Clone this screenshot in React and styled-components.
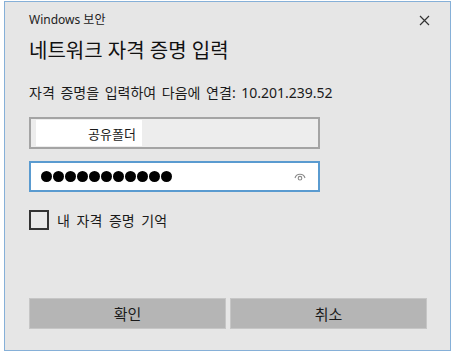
import styled, { createGlobalStyle } from 'styled-components';

const GlobalStyle = createGlobalStyle`
   html, body {
      margin: 0;
      padding: 0;
      background: #ffffff;
   }
   body {
      font-family: "Noto Sans", "Noto Sans CJK KR", sans-serif;
      color: #1a1a1a;
   }
`;

function CloseIcon() {
   return (
      <svg width="11" height="11" viewBox="0 0 11 11">
         <path d="M1 1 L10 10 M10 1 L1 10" stroke="#333" strokeWidth="1.2" fill="none" />
      </svg>
   );
}

function EyeIcon() {
   return (
      <svg width="12" height="9" viewBox="0 0 12 9">
         <path d="M1 6 A5.2 5.2 0 0 1 11 6" stroke="#8a8a8a" strokeWidth="1.1" fill="none" />
         <circle cx="6" cy="6.2" r="1.8" stroke="#8a8a8a" strokeWidth="1.1" fill="none" />
      </svg>
   );
}

function App() {
   const dots = Array.from({ length: 11 });
   return (
      <>
         <GlobalStyle />
         <Frame>
            <TopBar>
               <Caption>Windows 보안</Caption>
               <CloseButton>
                  <CloseIcon />
               </CloseButton>
            </TopBar>
            <Title>네트워크 자격 증명 입력</Title>
            <Subtitle>자격 증명을 입력하여 다음에 연결: 10.201.239.52</Subtitle>
            <Field>
               <Masked>공유폴더</Masked>
            </Field>
            <Field $focused>
               <Dots>
                  {dots.map((_, i) => (
                     <Dot key={i} />
                  ))}
               </Dots>
               <EyeIcon />
            </Field>
            <Remember>
               <Checkbox />
               <span>내 자격 증명 기억</span>
            </Remember>
            <Buttons>
               <Button>확인</Button>
               <Button>취소</Button>
            </Buttons>
         </Frame>
      </>
   );
}

const Frame = styled.div`
   box-sizing: border-box;
   width: 447px;
   height: 350px;
   margin: 1px 0 0 4px;
   border: 1px solid #86b0d8;
   box-shadow: 0 2px 0 -1px #c6dcef;
   background: #e6e6e6;
   padding: 10px 23px 21px 24px;
   display: flex;
   flex-direction: column;
`;

const TopBar = styled.div`
   display: flex;
   align-items: center;
   justify-content: space-between;
   height: 16px;
`;

const Caption = styled.div`
   font-size: 12px;
   line-height: 16px;
   color: #222;
`;

const CloseButton = styled.div`
   display: flex;
   align-items: center;
   margin-right: -3px;
`;

const Title = styled.div`
   margin-top: 9px;
   font-size: 20px;
   line-height: 28px;
   color: #111;
`;

const Subtitle = styled.div`
   margin-top: 18px;
   font-size: 14px;
   line-height: 20px;
   word-spacing: 2px;
   color: #1a1a1a;
`;

const Field = styled.div`
   box-sizing: border-box;
   width: 291px;
   height: ${(p) => (p.$focused ? '31px' : '32px')};
   margin-top: ${(p) => (p.$focused ? '12px' : '14px')};
   border: 2px solid ${(p) => (p.$focused ? '#5a9bd0' : '#a4a4a4')};
   background: ${(p) => (p.$focused ? '#ffffff' : '#ededed')};
   display: flex;
   align-items: center;
   justify-content: space-between;
   padding: ${(p) => (p.$focused ? '0 12px 0 10px' : '1px 0 1px 5px')};
`;

const Masked = styled.div`
   align-self: stretch;
   width: 106px;
   background: #ffffff;
   box-sizing: border-box;
   padding-left: 52px;
   display: flex;
   align-items: center;
   font-size: 13px;
   color: #1a1a1a;
   white-space: nowrap;
`;

const Dots = styled.div`
   display: flex;
   gap: 1px;
`;

const Dot = styled.span`
   width: 11px;
   height: 11px;
   border-radius: 50%;
   background: #000;
`;

const Remember = styled.div`
   margin-top: 18px;
   display: flex;
   align-items: center;
   gap: 8px;
   font-size: 14px;
   word-spacing: 3px;
   color: #1a1a1a;
`;

const Checkbox = styled.div`
   box-sizing: border-box;
   width: 20px;
   height: 20px;
   border: 2px solid #333;
   background: #e9e9e9;
`;

const Buttons = styled.div`
   margin-top: auto;
   display: grid;
   grid-template-columns: 1fr 1fr;
   gap: 4px;
`;

const Button = styled.div`
   box-sizing: border-box;
   height: 31px;
   border: 1px solid #c6c6c6;
   background: #b5b5b5;
   display: flex;
   align-items: center;
   justify-content: center;
   font-size: 15px;
   color: #1a1a1a;
`;

export default App;
